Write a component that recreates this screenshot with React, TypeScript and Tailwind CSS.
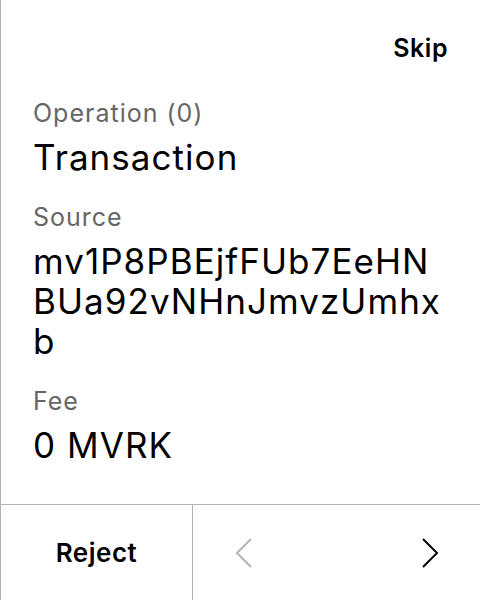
const Field = ({ label, value }: { label: string; value: string }) => (
  <div className="flex flex-col gap-2">
    <div className="text-[25px] leading-[32px] tracking-[0.04em] text-[#666666]">{label}</div>
    <div className="max-w-[410px] text-[35px] leading-[40px] tracking-[0.03em] text-black break-all">{value}</div>
  </div>
);

export default function App() {
  return (
    <div className="w-[480px] h-[600px] bg-white border-l border-[#b3b3b3] flex flex-col font-['Inter',sans-serif]">
      <div className="flex justify-end px-8 pt-8">
        <button className="text-[25px] leading-[32px] tracking-[0.02em] font-semibold text-black">Skip</button>
      </div>
      <div className="flex-1 flex flex-col gap-6 px-8 pt-[33px]">
        <Field label="Operation (0)" value="Transaction" />
        <Field label="Source" value="mv1P8PBEjfFUb7EeHNBUa92vNHnJmvzUmhxb" />
        <Field label="Fee" value="0 MVRK" />
      </div>
      <div className="h-[96px] border-t border-[#b3b3b3] flex">
        <button className="w-[192px] border-r border-[#b3b3b3] text-[26px] tracking-[0.02em] font-semibold text-black">
          Reject
        </button>
        <div className="flex-1 flex items-center justify-between pl-[41px] pr-[40px]">
          <svg width="20" height="32" viewBox="0 0 20 32" fill="none" stroke="#b3b3b3" strokeWidth="2">
            <polyline points="17,2 3,16 17,30" />
          </svg>
          <svg width="20" height="32" viewBox="0 0 20 32" fill="none" stroke="#000000" strokeWidth="2">
            <polyline points="3,2 17,16 3,30" />
          </svg>
        </div>
      </div>
    </div>
  );
}
